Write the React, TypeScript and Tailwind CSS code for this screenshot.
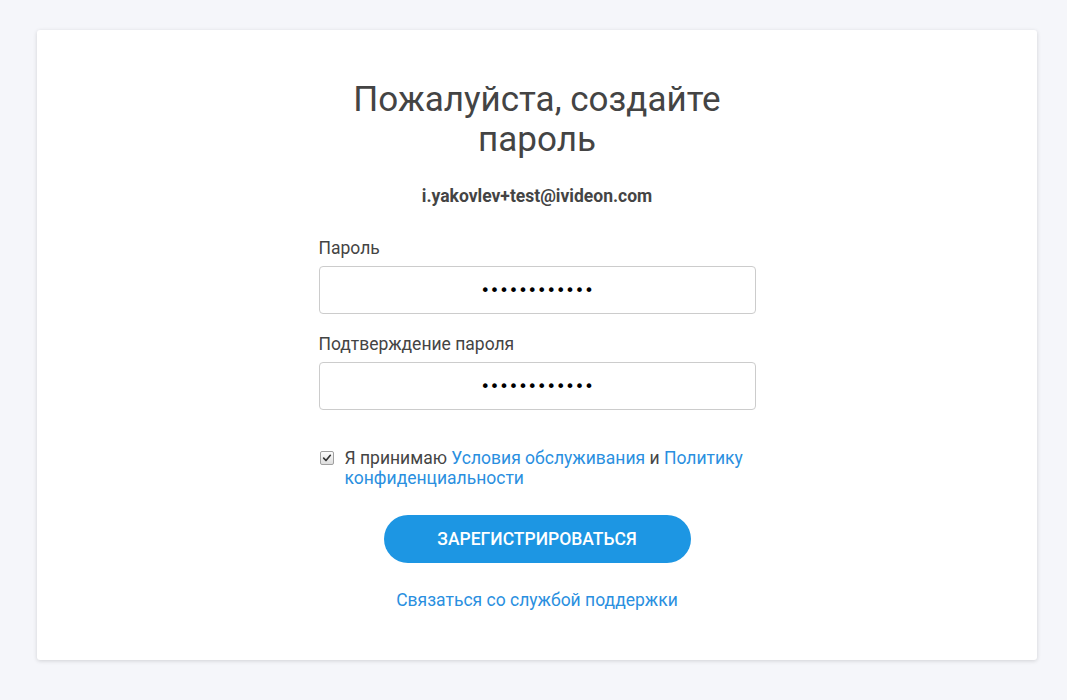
import React from 'react';

const App = () => {
  return (
    <div className="min-h-[700px] bg-[#f5f6fa] pt-[30px] pb-[40px] font-['Roboto',sans-serif]">
      <div className="ml-[37px] w-[1000px] h-[630px] bg-white rounded-[3px] shadow-[0_1px_4px_rgba(0,0,0,0.15)] flex flex-col items-center pt-[50px]">
        {/* Title */}
        <h1 className="w-[420px] text-center text-[35px] leading-[40px] text-[#444] font-normal">
          Пожалуйста, создайте пароль
        </h1>
        <div className="mt-[26px] text-[17.5px] leading-[20px] font-bold text-[#444]">i.yakovlev+test@ivideon.com</div>

        {/* Form */}
        <form className="w-[437px] mt-[32px]" onSubmit={(e) => e.preventDefault()}>
          <label className="block text-[17.5px] leading-[20px] text-[#444] mb-[8px]">Пароль</label>
          <input
            type="password"
            defaultValue="123456789012"
            className="block w-full h-[48px] border border-[#ccc] rounded-[4px] text-center text-[16px] font-['DejaVu_Sans',sans-serif] text-black outline-none"
          />
          <label className="block text-[17.5px] leading-[20px] text-[#444] mt-[20px] mb-[8px]">Подтверждение пароля</label>
          <input
            type="password"
            defaultValue="123456789012"
            className="block w-full h-[48px] border border-[#ccc] rounded-[4px] text-center text-[16px] font-['DejaVu_Sans',sans-serif] text-black outline-none"
          />

          <div className="flex items-start mt-[38px]">
            {/* Checkbox */}
            <span className="mt-[3px] ml-[1px] w-[14px] h-[14px] shrink-0 rounded-[2px] border border-[#a0a0a0] bg-gradient-to-b from-[#fcfcfc] to-[#dedede] flex items-center justify-center">
              <svg viewBox="0 0 12 12" className="w-[10px] h-[10px]">
                <path d="M2 6.2 L4.8 9 L10 2.8" fill="none" stroke="#333" strokeWidth="2" strokeLinecap="round" strokeLinejoin="round" />
              </svg>
            </span>
            <p className="ml-[11px] text-[17.5px] leading-[20px] text-[#444]">
              Я принимаю <a href="#" className="text-[#2a8fe0]">Условия обслуживания</a> и{' '}
              <a href="#" className="text-[#2a8fe0]">Политику конфиденциальности</a>
            </p>
          </div>

          <div className="flex justify-center mt-[27px]">
            <button className="w-[307px] h-[48px] rounded-full bg-[#1d96e3] text-white text-[17.5px] font-medium uppercase">
              Зарегистрироваться
            </button>
          </div>

          <div className="text-center mt-[24px]">
            <a href="#" className="text-[17.5px] text-[#2a8fe0]">Связаться со службой поддержки</a>
          </div>
        </form>
      </div>
    </div>
  );
};

export default App;
